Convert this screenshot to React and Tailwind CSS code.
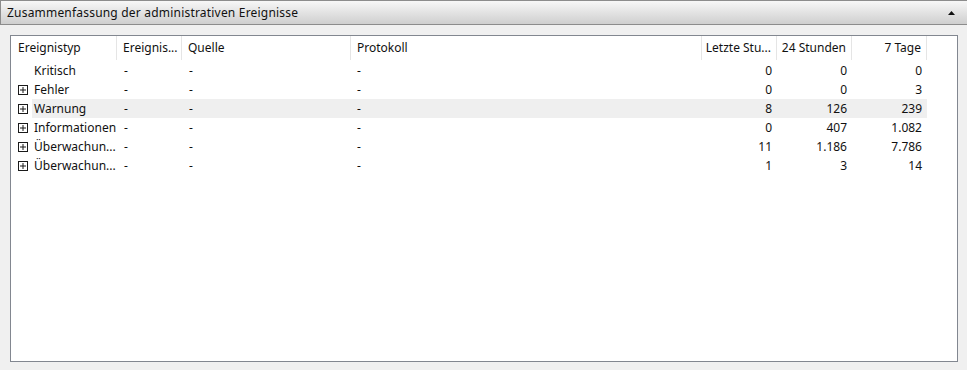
import React from 'react'

const rows = [
  { type: 'Kritisch', expand: false, h1: '0', h24: '0', d7: '0' },
  { type: 'Fehler', expand: true, h1: '0', h24: '0', d7: '3' },
  { type: 'Warnung', expand: true, h1: '8', h24: '126', d7: '239', selected: true },
  { type: 'Informationen', expand: true, h1: '0', h24: '407', d7: '1.082' },
  { type: 'Überwachun...', expand: true, h1: '11', h24: '1.186', d7: '7.786' },
  { type: 'Überwachun...', expand: true, h1: '1', h24: '3', d7: '14' },
]

function PlusBox() {
  return (
    <svg width="10" height="10" viewBox="0 0 10 10" className="block">
      <rect x="0.5" y="0.5" width="9" height="9" fill="white" stroke="#1a1a1a" />
      <path d="M2 5h6M5 2v6" stroke="#1a1a1a" />
    </svg>
  )
}

function HeaderCell({ children, right, w }) {
  return (
    <div className={`${w} h-full flex items-center border-r border-[#e5e5e5] ${right ? 'justify-end pr-[5px]' : 'pl-[6px]'}`}>
      <span className="whitespace-nowrap">{children}</span>
    </div>
  )
}

export default function App() {
  return (
    <div
      className="w-[967px] h-[370px] bg-[#f0f0f0] text-[12px] text-[#111] overflow-hidden"
      style={{ fontFamily: '"Segoe UI", "Noto Sans", sans-serif' }}
    >
      <div className="h-[25px] flex items-center justify-between border-y border-l border-[#8c8c8c] bg-gradient-to-b from-[#f7f7f7] to-[#cfcfcf] pl-[6px] pr-[12px]">
        <span className="whitespace-nowrap tracking-[0.2px]">Zusammenfassung der administrativen Ereignisse</span>
        <svg width="7" height="4" viewBox="0 0 7 4">
          <path d="M0 4L3.5 0L7 4Z" fill="#111" />
        </svg>
      </div>

      <div className="ml-[10px] mt-[10px] w-[948px] h-[327px] bg-white border border-[#828790]">
        <div className="flex h-[24px]">
          <HeaderCell w="w-[106px] pl-[7px]">Ereignistyp</HeaderCell>
          <HeaderCell w="w-[65px]">Ereignis...</HeaderCell>
          <HeaderCell w="w-[169px]">Quelle</HeaderCell>
          <HeaderCell w="w-[351px]">Protokoll</HeaderCell>
          <HeaderCell w="w-[75px]" right>Letzte Stu...</HeaderCell>
          <HeaderCell w="w-[75px]" right>24 Stunden</HeaderCell>
          <HeaderCell w="w-[75px]" right>7 Tage</HeaderCell>
        </div>
        <div className="mt-[1px]">
          {rows.map((r, i) => (
            <div key={i} className="flex h-[19px] items-center">
              <div className="w-[21px] pl-[7px] flex items-center">
                {r.expand && <PlusBox />}
              </div>
              <div className={`flex h-full items-center ${r.selected ? 'bg-[#efefef]' : ''}`}>
                <div className="w-[85px] pl-[2px] whitespace-nowrap overflow-hidden">{r.type}</div>
                <div className="w-[65px] pl-[7px]">-</div>
                <div className="w-[169px] pl-[7px]">-</div>
                <div className="w-[351px] pl-[6px]">-</div>
                <div className="w-[75px] pr-[5px] text-right">{r.h1}</div>
                <div className="w-[75px] pr-[5px] text-right">{r.h24}</div>
                <div className="w-[75px] pr-[5px] text-right">{r.d7}</div>
              </div>
            </div>
          ))}
        </div>
      </div>
    </div>
  )
}
